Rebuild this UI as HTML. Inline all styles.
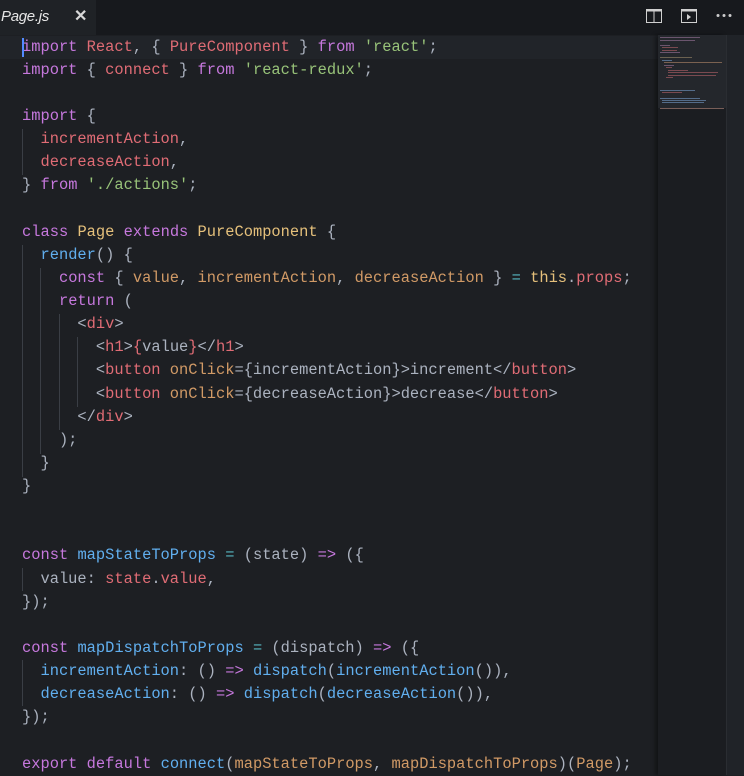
<!DOCTYPE html>
<html><head><meta charset="utf-8"><style>
html,body{margin:0;padding:0;width:744px;height:775px;overflow:hidden;background:#1d1f23;}
.tabbar{position:absolute;left:0;top:0;width:744px;height:35px;background:#17191d;}
.tab{position:absolute;left:0;top:0;width:96px;height:35px;background:#1f2226;}
.tab .t{position:absolute;left:1px;top:8px;font:italic 15px "Liberation Sans",sans-serif;color:#e6e6e6;letter-spacing:-0.3px}
.tab .x{position:absolute;left:74px;top:6px;font:bold 16px "Liberation Sans",sans-serif;color:#d8d8d8}
.ed{position:absolute;left:0;top:35px;width:744px;height:740px;background:#1d1f23}
.cur{position:absolute;left:0;top:36px;width:658px;height:23px;background:#212429}
.caret{position:absolute;left:22px;top:38px;width:2px;height:19px;background:#528bff}
pre{position:absolute;left:22px;top:35.7px;margin:0;font:15.4px/23.13px "Liberation Mono",monospace;color:#abb2bf}
.k{color:#c678dd}.r{color:#e06c75}.s{color:#98c379}.o{color:#d19a66}.f{color:#61afef}.c{color:#56b6c2}.y{color:#e5c07b}
.g{position:absolute;width:1px;background:#3a3e45}
.mini{position:absolute;left:658px;top:35px;width:68px;height:740px;background:#1b1d21;box-shadow:-3px 0 4px rgba(0,0,0,.4)}
.miniv{position:absolute;left:658px;top:35px;width:68px;height:73px;background:#24272c}
.sb{position:absolute;left:726px;top:35px;width:18px;height:740px;background:#202328;border-left:1px solid #2a2d32}
.ml{position:absolute;height:1px;opacity:.7}
</style></head><body>
<div class="tabbar">
 <div class="tab"><span class="t">Page.js</span><span class="x">✕</span></div>
 <svg style="position:absolute;left:646px;top:9px" width="16" height="14"><rect x="0.5" y="0.5" width="15" height="13" fill="none" stroke="#d0d0d0"/><rect x="0.5" y="0.5" width="15" height="2" fill="#d0d0d0"/><line x1="8" y1="1" x2="8" y2="14" stroke="#d0d0d0"/></svg>
 <svg style="position:absolute;left:681px;top:9px" width="16" height="14"><rect x="0.5" y="0.5" width="15" height="13" fill="none" stroke="#d0d0d0"/><rect x="0.5" y="0.5" width="15" height="2" fill="#d0d0d0"/><path d="M6 5 L10 8 L6 11Z" fill="#d0d0d0"/></svg>
 <svg style="position:absolute;left:716px;top:13px" width="16" height="5"><circle cx="2" cy="2.5" r="1.5" fill="#ccc"/><circle cx="8" cy="2.5" r="1.5" fill="#ccc"/><circle cx="14" cy="2.5" r="1.5" fill="#ccc"/></svg>
</div>
<div class="ed"></div>
<div class="cur"></div>
<div class="g" style="left:22px;top:129px;height:46px"></div>
<div class="g" style="left:22px;top:245px;height:232px"></div>
<div class="g" style="left:40px;top:268px;height:186px"></div>
<div class="g" style="left:59px;top:314px;height:116px"></div>
<div class="g" style="left:77px;top:337px;height:70px"></div>
<div class="g" style="left:22px;top:568px;height:23px"></div>
<div class="g" style="left:22px;top:660px;height:46px"></div>
<pre><span class="k">import</span> <span class="r">React</span>, { <span class="r">PureComponent</span> } <span class="k">from</span> <span class="s">'react'</span>;
<span class="k">import</span> { <span class="r">connect</span> } <span class="k">from</span> <span class="s">'react-redux'</span>;

<span class="k">import</span> {
  <span class="r">incrementAction</span>,
  <span class="r">decreaseAction</span>,
} <span class="k">from</span> <span class="s">'./actions'</span>;

<span class="k">class</span> <span class="y">Page</span> <span class="k">extends</span> <span class="y">PureComponent</span> {
  <span class="f">render</span>() {
    <span class="k">const</span> { <span class="o">value</span>, <span class="o">incrementAction</span>, <span class="o">decreaseAction</span> } <span class="c">=</span> <span class="y">this</span>.<span class="r">props</span>;
    <span class="k">return</span> (
      &lt;<span class="r">div</span>&gt;
        &lt;<span class="r">h1</span>&gt;<span class="r">{</span>value<span class="r">}</span>&lt;/<span class="r">h1</span>&gt;
        &lt;<span class="r">button</span> <span class="o">onClick</span>={incrementAction}&gt;increment&lt;/<span class="r">button</span>&gt;
        &lt;<span class="r">button</span> <span class="o">onClick</span>={decreaseAction}&gt;decrease&lt;/<span class="r">button</span>&gt;
      &lt;/<span class="r">div</span>&gt;
    );
  }
}


<span class="k">const</span> <span class="f">mapStateToProps</span> <span class="c">=</span> (state) <span class="k">=&gt;</span> ({
  value: <span class="r">state</span>.<span class="r">value</span>,
});

<span class="k">const</span> <span class="f">mapDispatchToProps</span> <span class="c">=</span> (dispatch) <span class="k">=&gt;</span> ({
  <span class="f">incrementAction</span>: () <span class="k">=&gt;</span> <span class="f">dispatch</span>(<span class="f">incrementAction</span>()),
  <span class="f">decreaseAction</span>: () <span class="k">=&gt;</span> <span class="f">dispatch</span>(<span class="f">decreaseAction</span>()),
});

<span class="k">export</span> <span class="k">default</span> <span class="f">connect</span>(<span class="o">mapStateToProps</span>, <span class="o">mapDispatchToProps</span>)(<span class="o">Page</span>);</pre>
<div class="caret"></div>
<div class="mini"></div>
<div class="miniv"></div>
<div class="ml" style="left:660px;top:37px;width:40px;background:#8a6a8a"></div>
<div class="ml" style="left:660px;top:40px;width:35px;background:#8a6a8a"></div>
<div class="ml" style="left:660px;top:45px;width:10px;background:#8a6a8a"></div>
<div class="ml" style="left:662px;top:47px;width:16px;background:#a05a60"></div>
<div class="ml" style="left:662px;top:50px;width:15px;background:#a05a60"></div>
<div class="ml" style="left:660px;top:52px;width:20px;background:#8a6a8a"></div>
<div class="ml" style="left:660px;top:57px;width:32px;background:#8a7a60"></div>
<div class="ml" style="left:662px;top:60px;width:10px;background:#6a8ab0"></div>
<div class="ml" style="left:664px;top:62px;width:58px;background:#a07a60"></div>
<div class="ml" style="left:664px;top:65px;width:10px;background:#8a6a8a"></div>
<div class="ml" style="left:666px;top:67px;width:6px;background:#a05a60"></div>
<div class="ml" style="left:668px;top:70px;width:20px;background:#a05a60"></div>
<div class="ml" style="left:668px;top:72px;width:50px;background:#a05a60"></div>
<div class="ml" style="left:668px;top:75px;width:48px;background:#a05a60"></div>
<div class="ml" style="left:666px;top:77px;width:7px;background:#a05a60"></div>
<div class="ml" style="left:660px;top:90px;width:35px;background:#6a8ab0"></div>
<div class="ml" style="left:662px;top:92px;width:20px;background:#a05a60"></div>
<div class="ml" style="left:660px;top:98px;width:40px;background:#6a8ab0"></div>
<div class="ml" style="left:662px;top:100px;width:44px;background:#6a8ab0"></div>
<div class="ml" style="left:662px;top:102px;width:42px;background:#6a8ab0"></div>
<div class="ml" style="left:660px;top:108px;width:64px;background:#a07a70"></div>
<div class="sb"></div>
</body></html>
